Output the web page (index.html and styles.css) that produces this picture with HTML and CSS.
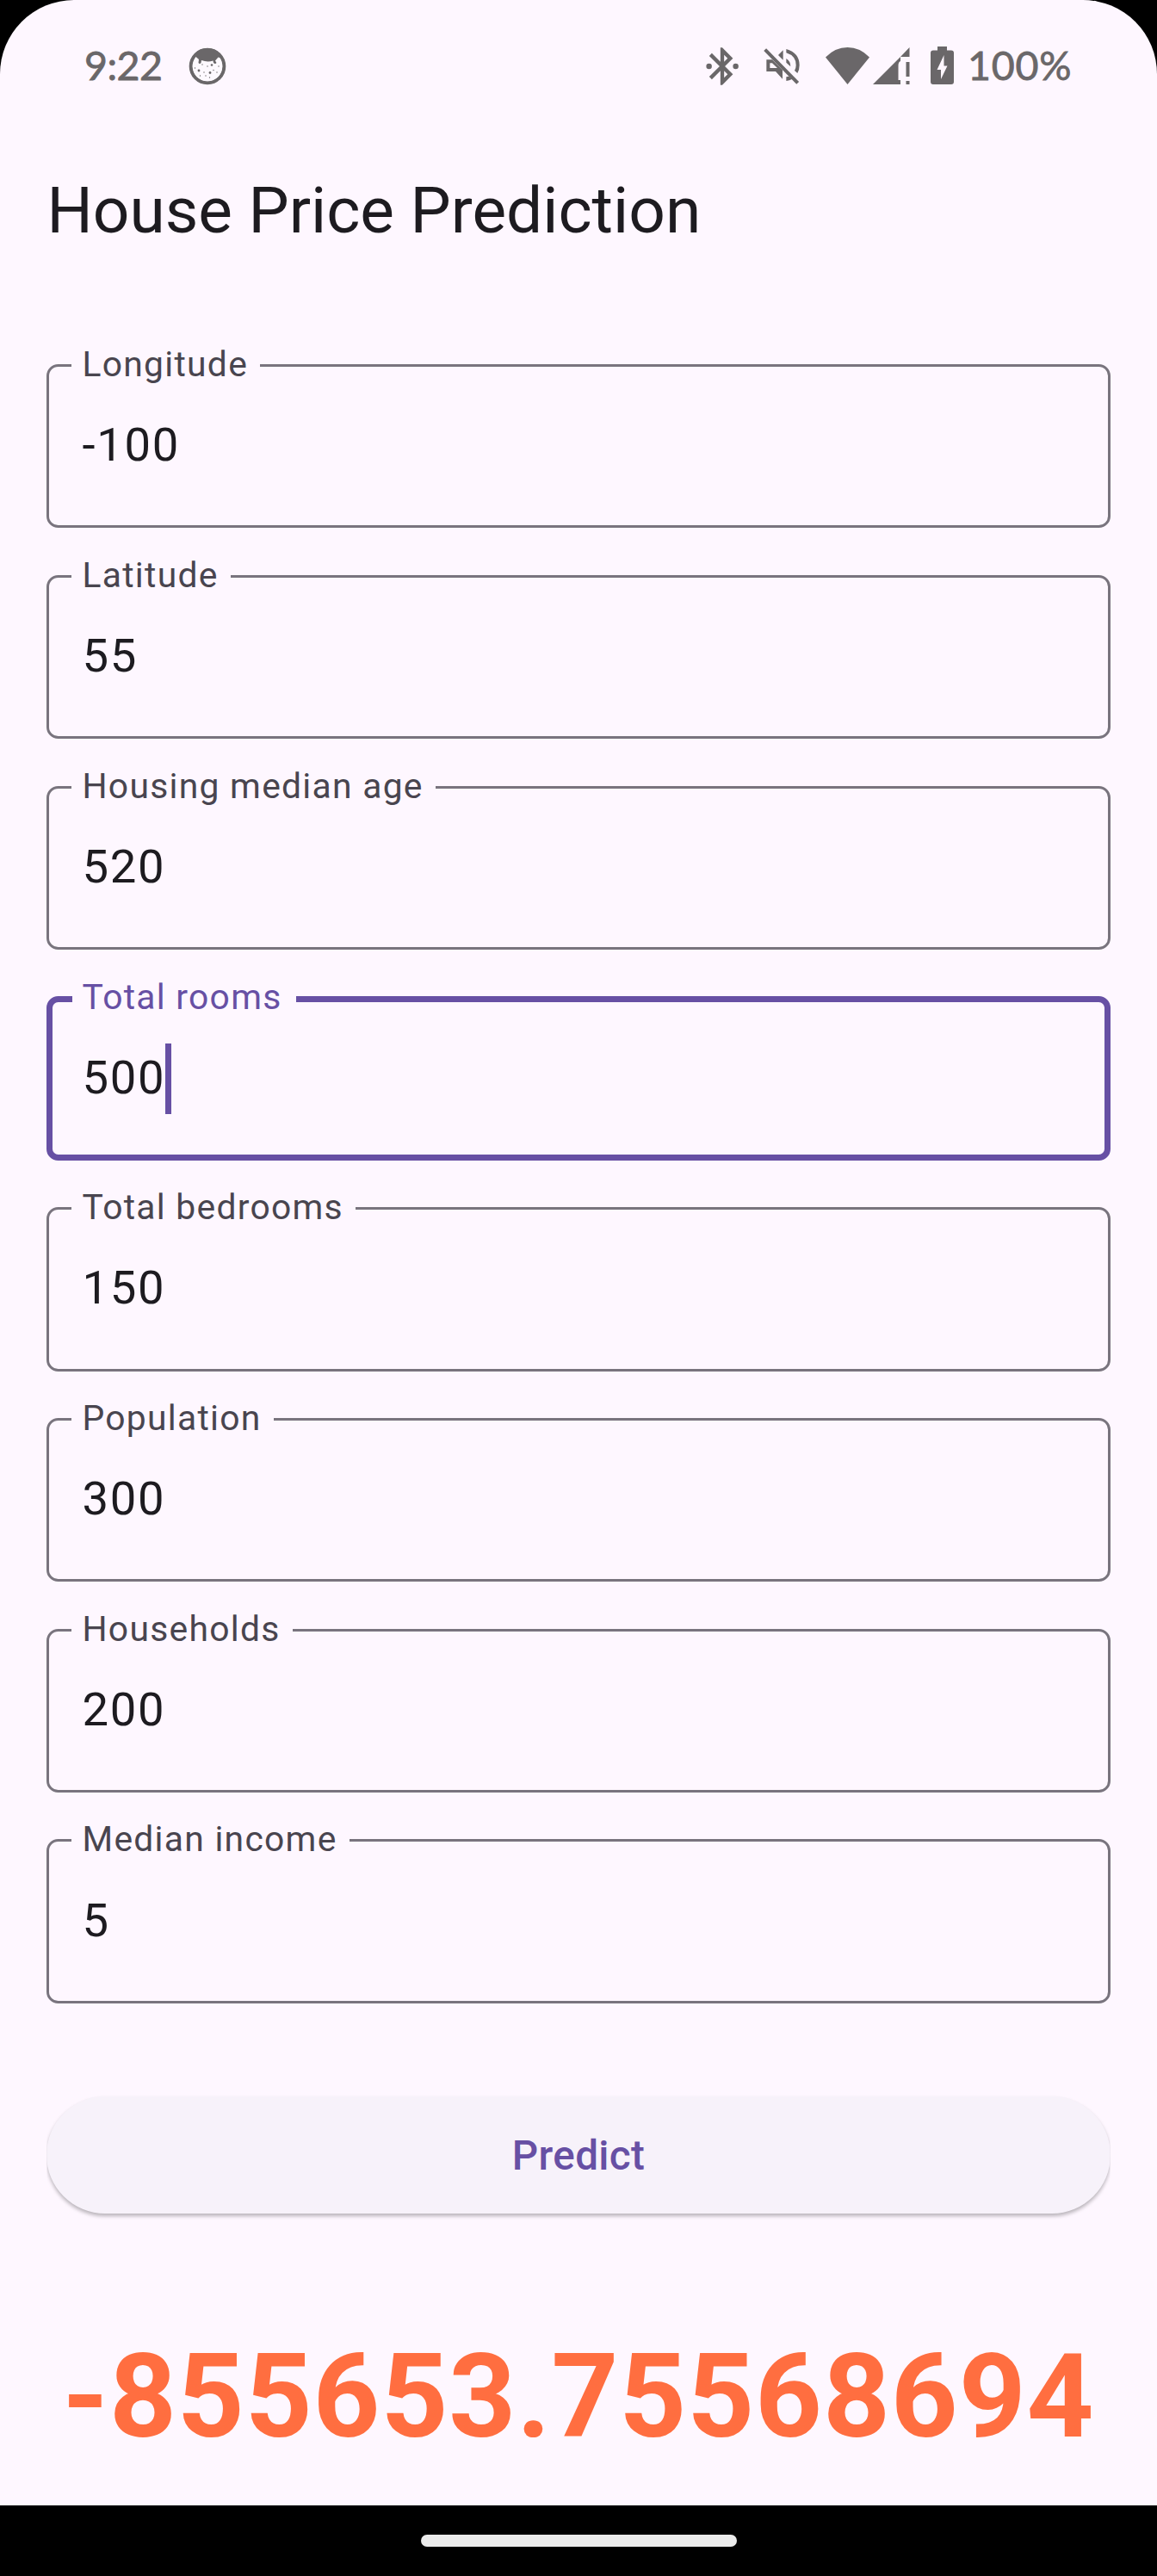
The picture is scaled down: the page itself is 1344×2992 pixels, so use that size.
FILE: index.html
```html
<!DOCTYPE html>
<html lang="en">
<head>
<meta charset="utf-8">
<title>House Price Prediction</title>
<link rel="stylesheet" href="styles.css">
</head>
<body>
<div class="screen">
  <main class="app">
    <header class="status-bar">
      <div class="status-left">
        <span class="clock">9:22</span>
        <svg class="cookie" viewBox="0 0 44 44">
          <circle cx="22" cy="22" r="19.3" fill="none" stroke="#6a6769" stroke-width="4"/>
          <circle cx="22" cy="22" r="17.3" fill="#fdf9fe"/>
          <path d="M5 13Q9 1 22 1T39 13L34.500 11.500L31 15.500L32.500 18Q31 20 29 18L28.500 15.500Q22 17.500 15 15L14.500 18Q13 20 11.500 18L12 14L8.500 11Z" fill="#6a6769"/>
          <g fill="#6a6769"><circle cx="12" cy="27" r="1.400"/><circle cx="27" cy="20.500" r="1.300"/><circle cx="25" cy="29.500" r="1.400"/><circle cx="7.500" cy="24" r=".7"/><circle cx="16" cy="20" r=".7"/><circle cx="22" cy="22" r=".7"/><circle cx="29" cy="26.500" r=".7"/><circle cx="35" cy="22" r=".7"/><circle cx="18" cy="29" r=".7"/><circle cx="13.500" cy="33" r=".7"/><circle cx="20" cy="33" r=".7"/><circle cx="24.500" cy="35" r=".7"/><circle cx="33" cy="29" r=".7"/></g>
        </svg>
      </div>
      <div class="status-right">
        <svg class="bluetooth" viewBox="0 0 24 24"><path d="M17.710 7.710L12 2h-1v7.590L6.410 5 5 6.410 10.590 12 5 17.590 6.410 19 11 14.410V22h1l5.710-5.710-4.300-4.290zM13 5.830l1.880 1.880L13 9.590zM14.880 16.290L13 18.170v-3.760z"/><circle cx="4.900" cy="12" r="1.500"/><circle cx="19.200" cy="12" r="1.500"/></svg>
        <svg class="mute" viewBox="320 78 126 130"><path d="M330 121H350L386 157V188L362 162H330ZM342 133V150H368L350 133ZM371 105L388 88V122ZM399 117Q414 126 414 145L399 131ZM399 84Q445 97 445 140Q445 155 438 168L428 159Q433 150 433 140Q433 108 399 97ZM399 181L408 179L420 188Q410 194 399 195Z"/><path d="M325 86L439 202" fill="none" stroke="#6a6769" stroke-width="12"/></svg>
        <svg class="wifi" viewBox="0 0 51 43"><path d="M0 11.500Q11 0 25.500 0T51 11.500L25.500 43Z"/></svg>
        <svg class="signal" viewBox="0 0 43 43"><path d="M42.500 0V11H32ZM0 43L32 11V16Q29.500 17 29.500 21V38H32V43ZM38.500 17H42.500V34H38.500ZM38.500 39H42.500V43H38.500Z"/></svg>
        <svg class="battery" viewBox="0 0 27 44"><path fill-rule="evenodd" d="M8 0H19V4.500H24Q27 4.500 27 7.500V41Q27 44 24 44H3Q0 44 0 41V7.500Q0 4.500 3 4.500H8ZM15.500 10L7.500 27H12V38L19.500 22.500H15.500Z"/></svg>
        <span class="charge">100%</span>
      </div>
    </header>

    <h1 class="title">House Price Prediction</h1>

    <form class="fields">
      <div class="field"><span class="label">Longitude</span><span class="value">-100</span></div>
      <div class="field"><span class="label">Latitude</span><span class="value">55</span></div>
      <div class="field"><span class="label">Housing median age</span><span class="value">520</span></div>
      <div class="field focused"><span class="label">Total rooms</span><span class="value">500</span><span class="caret"></span></div>
      <div class="field"><span class="label">Total bedrooms</span><span class="value">150</span></div>
      <div class="field"><span class="label">Population</span><span class="value">300</span></div>
      <div class="field"><span class="label">Households</span><span class="value">200</span></div>
      <div class="field"><span class="label">Median income</span><span class="value">5</span></div>
    </form>

    <button class="predict" type="button">Predict</button>
    <output class="result">-855653.75568694</output>
  </main>
  <footer class="nav"><span class="handle"></span></footer>
</div>
</body>
</html>
```

FILE: styles.css
```css
* { box-sizing: border-box; }

body {
  margin: 0;
  background: #000;
  font-family: Roboto, sans-serif;
  color: #1d1b20;
}

.screen {
  width: 1344px;
  height: 2992px;
  display: flex;
  flex-direction: column;
  overflow: hidden;
}

.app {
  height: 2910px;
  display: flex;
  flex-direction: column;
  padding: 0 54.4px;
  background: #fef7ff;
  border-radius: 86px 86px 0 0;
}

.status-bar {
  height: 154px;
  display: flex;
  justify-content: space-between;
  padding: 0 43.6px;
  font-family: Lato, sans-serif;
  font-size: 46.5px;
  line-height: 60px;
  color: #6a6769;
  -webkit-text-stroke: .8px #6a6769;
}

.status-left, .status-right { display: flex; align-items: center; }
.status-bar svg { fill: #6a6769; -webkit-text-stroke: 0; flex: none; }
.clock { width: 121px; padding-bottom: 4px; letter-spacing: -.5px; }
.charge { width: 122px; padding-bottom: 4px; white-space: nowrap; letter-spacing: .8px; }
.cookie { width: 44px; height: 44px; }
.bluetooth { width: 52px; height: 52px; margin-right: 22px; }
.mute { width: 42px; height: 43.33px; margin-right: 30.5px; }
.wifi { width: 51px; height: 43px; margin: 0 4px 1px 0; }
.signal { width: 43px; height: 43px; margin: 0 24px 1px 0; }
.battery { width: 27px; height: 44px; margin: 0 16px 2px 0; }

.title {
  margin: 46px 0 0;
  height: 90px;
  font-size: 74.8px;
  font-weight: 400;
  line-height: 90px;
}

.fields {
  display: flex;
  flex-direction: column;
  gap: 54.4px;
  margin-top: 133px;
}

.field {
  position: relative;
  height: 190.4px;
  display: flex;
  align-items: center;
  padding-left: 38.2px;
  border: 3px solid #79747e;
  border-radius: 13.6px;
}

.label {
  position: absolute;
  top: -27px;
  left: 26px;
  padding: 0 14px 0 12.1px;
  background: #fef7ff;
  font-size: 40.8px;
  line-height: 48px;
  letter-spacing: 1.275px;
  color: #49454f;
}

.value {
  padding-bottom: 3px;
  font-size: 54.4px;
  line-height: 81px;
  letter-spacing: 1.7px;
}

.focused { border: 7px solid #6750a4; padding-left: 34.2px; }
.focused .label { top: -30px; left: 23px; padding: 0 16.5px 0 11.1px; color: #6750a4; }

.caret {
  width: 7px;
  height: 82px;
  background: #6750a4;
}

.predict {
  margin: 108px 0 0;
  height: 136px;
  border: 0;
  padding: 1px 0 0;
  border-radius: 68px;
  background: #f7f2fa;
  box-shadow: 0 3px 4px rgba(0, 0, 0, .27);
  clip-path: inset(-2px 0 -12px 0);
  font: 500 47.6px/136px Roboto, sans-serif;
  letter-spacing: .34px;
  color: #6750a4;
}

.result {
  margin: 134px -20px 0;
  text-align: center;
  white-space: nowrap;
  font-size: 136px;
  font-weight: 700;
  line-height: 158px;
  letter-spacing: .85px;
  color: #ff6e40;
}

.nav {
  height: 82px;
  display: flex;
  justify-content: center;
  padding-top: 34px;
}

.handle {
  width: 367px;
  height: 14px;
  border-radius: 7px;
  background: #ebebeb;
}
```
